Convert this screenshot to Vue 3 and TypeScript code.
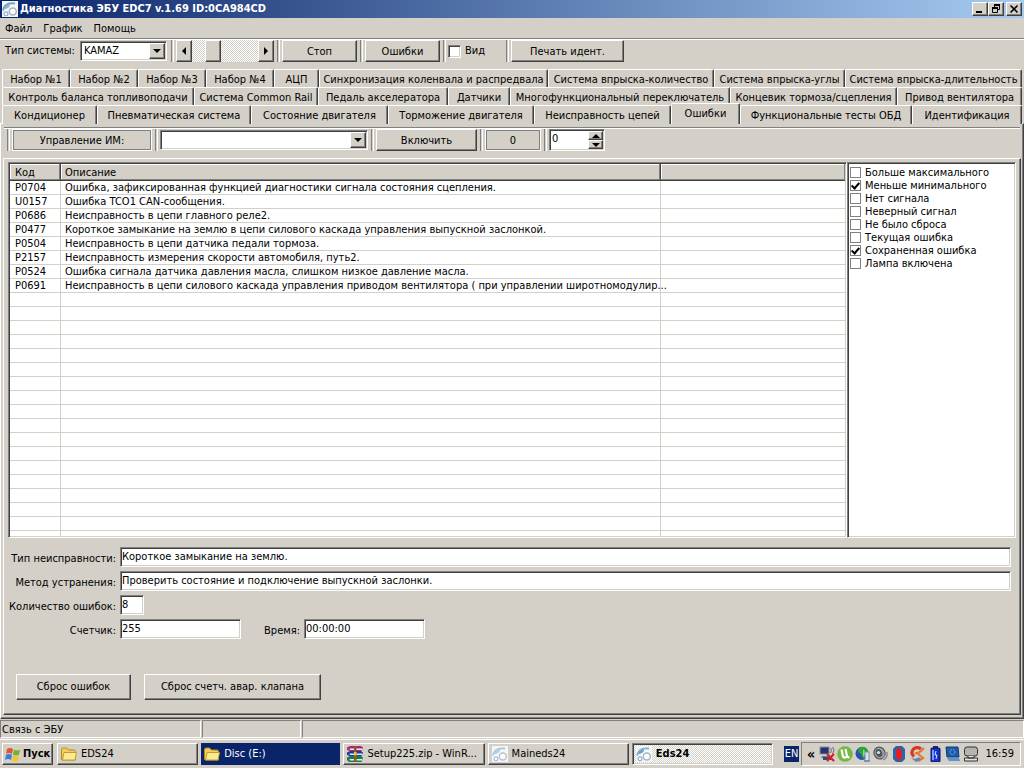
<script setup lang="ts">
import { ref } from 'vue'

interface Fault {
  code: string
  text: string
}

interface Flag {
  label: string
  on: boolean
}

const menu = ['Файл', 'График', 'Помощь']

const tabRows: string[][] = [
  ['Набор №1', 'Набор №2', 'Набор №3', 'Набор №4', 'АЦП', 'Синхронизация коленвала и распредвала', 'Система впрыска-количество', 'Система впрыска-углы', 'Система впрыска-длительность'],
  ['Контроль баланса топливоподачи', 'Система Common Rail', 'Педаль акселератора', 'Датчики', 'Многофункциональный переключатель', 'Концевик тормоза/сцепления', 'Привод вентилятора'],
  ['Кондиционер', 'Пневматическая система', 'Состояние двигателя', 'Торможение двигателя', 'Неисправность цепей', 'Ошибки', 'Функциональные тесты ОБД', 'Идентификация'],
]
const activeTab = ref('Ошибки')

const faults: Fault[] = [
  { code: 'P0704', text: 'Ошибка, зафиксированная функцией диагностики сигнала состояния сцепления.' },
  { code: 'U0157', text: 'Ошибка TCO1 CAN-сообщения.' },
  { code: 'P0686', text: 'Неисправность в цепи главного реле2.' },
  { code: 'P0477', text: 'Короткое замыкание на землю в цепи силового каскада управления выпускной заслонкой.' },
  { code: 'P0504', text: 'Неисправность в цепи датчика педали тормоза.' },
  { code: 'P2157', text: 'Неисправность измерения скорости автомобиля, путь2.' },
  { code: 'P0524', text: 'Ошибка сигнала датчика давления масла, слишком низкое давление масла.' },
  { code: 'P0691', text: 'Неисправность в цепи силового каскада управления приводом вентилятора ( при управлении широтномодулир...' },
]
const blankRows = 60

const flags = ref<Flag[]>([
  { label: 'Больше максимального', on: false },
  { label: 'Меньше минимального', on: true },
  { label: 'Нет сигнала', on: false },
  { label: 'Неверный сигнал', on: false },
  { label: 'Не было сброса', on: false },
  { label: 'Текущая ошибка', on: false },
  { label: 'Сохраненная ошибка', on: true },
  { label: 'Лампа включена', on: false },
])

const view = ref(false)
const faultType = ref('Короткое замыкание на землю.')
const remedy = ref('Проверить состояние и подключение выпускной заслонки.')
const faultCount = ref('8')
const counter = ref('255')
const time = ref('00:00:00')
const level = ref('0')

function step(delta: number) {
  level.value = String(Number(level.value) + delta)
}
</script>

<template>
  <div class="screen">
    <header class="title">
      <svg class="icon" viewBox="0 0 16 16" aria-hidden="true">
        <rect width="16" height="16" fill="#f4f6f8" />
        <path d="M1 9.500C2 4.500 6 1.500 13 2.500" fill="none" stroke="#6fa3c4" stroke-width="2" />
        <path d="M2 8C3 5 5 3.500 8 3.500L7.500 6 4 8z" fill="#8fb8d0" />
        <circle cx="10.800" cy="10.500" r="3.500" fill="#fff" stroke="#a9b3bf" stroke-width="1.500" />
        <circle cx="4" cy="12.800" r="1.900" fill="#fff" stroke="#8fb0d8" stroke-width="1.200" />
      </svg>
      <h1>Диагностика ЭБУ EDC7 v.1.69 ID:0CA984CD</h1>
      <div class="window-buttons">
        <button class="raised" aria-label="Свернуть"><svg viewBox="0 0 12 10"><path d="M2 8h6" stroke="#000" stroke-width="2" /></svg></button>
        <button class="raised" aria-label="Восстановить"><svg viewBox="0 0 12 10"><path d="M4.500 3V1.500h5v4H8M4 1.500h6M2.500 4.500h5v4h-5zM2 4.500h6" fill="none" stroke="#000" /><path d="M4 1h6M2 4h6" stroke="#000" stroke-width="2" /></svg></button>
        <button class="raised close" aria-label="Закрыть"><svg viewBox="0 0 12 10"><path d="M2.500 1.500l7 7M9.500 1.500l-7 7" stroke="#000" stroke-width="1.600" /></svg></button>
      </div>
    </header>

    <nav class="menu">
      <a v-for="item in menu" :key="item" href="#">{{ item }}</a>
    </nav>

    <div class="toolbar">
      <label class="system" for="system">Тип системы:</label>
      <div class="combo system-combo">
        <select id="system"><option>KAMAZ</option></select>
        <span class="drop raised"><i class="down"></i></span>
      </div>
      <span class="grip"></span>
      <div class="scroller">
        <button class="raised" aria-label="Назад"><i class="left"></i></button>
        <span class="thumb raised"></span>
        <button class="raised" aria-label="Вперёд"><i class="right"></i></button>
      </div>
      <span class="grip"></span>
      <button class="raised w75">Стоп</button>
      <span class="grip"></span>
      <button class="raised w75">Ошибки</button>
      <span class="grip"></span>
      <label class="view"><input v-model="view" type="checkbox" class="check sunken" />Вид</label>
      <span class="grip"></span>
      <button class="raised w113">Печать идент.</button>
    </div>

    <div class="tabs" role="tablist">
      <div v-for="(row, r) in tabRows" :key="r" class="tab-row" :class="'row-' + (r + 1)">
        <button
          v-for="tab in row"
          :key="tab"
          class="tab"
          :class="{ active: tab === activeTab }"
          role="tab"
          :aria-selected="tab === activeTab"
          @click="activeTab = tab"
        >{{ tab }}</button>
      </div>
    </div>

    <main class="page">
      <div class="toolbar control-bar">
        <span class="grip first"></span>
        <span class="etched w140">Управление ИМ:</span>
        <span class="grip"></span>
        <div class="combo actuator">
          <select aria-label="Управление ИМ"><option></option></select>
          <span class="drop raised"><i class="down"></i></span>
        </div>
        <span class="grip"></span>
        <button class="raised w101">Включить</button>
        <span class="grip"></span>
        <span class="etched w56">0</span>
        <span class="grip"></span>
        <div class="spinner sunken">
          <input v-model="level" aria-label="Значение" />
          <div class="steps">
            <button class="raised" aria-label="Больше" @click="step(1)"><i class="up"></i></button>
            <button class="raised" aria-label="Меньше" @click="step(-1)"><i class="down"></i></button>
          </div>
        </div>
      </div>

      <section class="panel">
        <div class="lists">
          <div class="fault-list sunken">
            <table>
              <colgroup><col class="c-code" /><col class="c-text" /><col /></colgroup>
              <thead>
                <tr><th>Код</th><th>Описание</th><th></th></tr>
              </thead>
              <tbody>
                <tr v-for="f in faults" :key="f.code"><td>{{ f.code }}</td><td>{{ f.text }}</td><td></td></tr>
                <tr v-for="n in blankRows" :key="n"><td></td><td></td><td></td></tr>
              </tbody>
            </table>
          </div>
          <div class="flags sunken">
            <label v-for="flag in flags" :key="flag.label"><input v-model="flag.on" type="checkbox" class="check flat" />{{ flag.label }}</label>
          </div>
        </div>

        <form class="details" @submit.prevent>
          <label for="type">Тип неисправности:</label>
          <input id="type" v-model="faultType" class="sunken" />
          <label for="remedy">Метод устранения:</label>
          <input id="remedy" v-model="remedy" class="sunken" />
          <label for="count">Количество ошибок:</label>
          <input id="count" v-model="faultCount" class="sunken tiny" />
          <label for="counter">Счетчик:</label>
          <div class="pair">
            <input id="counter" v-model="counter" class="sunken" />
            <label for="time">Время:</label>
            <input id="time" v-model="time" class="sunken" />
          </div>
        </form>

        <div class="actions">
          <button class="raised w115">Сброс ошибок</button>
          <button class="raised w177">Сброс счетч. авар. клапана</button>
        </div>
      </section>
    </main>

    <footer class="status">
      <span>Связь с ЭБУ</span><span></span><span></span>
    </footer>

    <div class="taskbar">
      <button class="raised start">
        <svg class="icon" viewBox="0 0 16 16" aria-hidden="true">
          <path d="M2 3C4 1.500 6 1.500 8 3L7 8C5 6.500 3 6.500 1 8z" fill="#e2562b" />
          <path d="M9 3.500C11 4.800 13 4.800 15 3.500L14 8.500C12 9.800 10 9.800 8 8.500z" fill="#6fb52c" />
          <path d="M1 9C3 7.500 5 7.500 7 9L6 14C4 12.500 2 12.500 0 14z" fill="#3b7de0" />
          <path d="M8 9.500C10 10.800 12 10.800 14 9.500L13 14.500C11 15.800 9 15.800 7 14.500z" fill="#f7c51e" />
        </svg>
        Пуск
      </button>
      <div class="tasks">
        <button class="raised task">
          <svg class="icon" viewBox="0 0 16 16" aria-hidden="true"><path d="M.5 3.500Q.5 2 2 2h3.500l2 2H13q1.500 0 1.500 1.500v8.500h-13q-1 0-1-1z" fill="#f2cf5c" stroke="#b48a1e" /><path d="M3 6.500h12.500l-1.500 7.500H1.500z" fill="#fdeb94" stroke="#c79b2b" /></svg>
          <span>EDS24</span>
        </button>
        <button class="task flash">
          <svg class="icon" viewBox="0 0 16 16" aria-hidden="true"><path d="M.5 3.500Q.5 2 2 2h3.500l2 2H13q1.500 0 1.500 1.500v8.500h-13q-1 0-1-1z" fill="#f2cf5c" stroke="#b48a1e" /><path d="M3 6.500h12.500l-1.500 7.500H1.500z" fill="#fdeb94" stroke="#c79b2b" /></svg>
          <span>Disc (E:)</span>
        </button>
        <button class="raised task">
          <svg class="icon" viewBox="0 0 16 16" aria-hidden="true">
            <path d="M0 1.500L3 0h11l2 1.500L14.500 5H2L0 3.500z" fill="#a82870" /><path d="M2.500 2.500H15v1.500H3z" fill="#f4e6ee" />
            <path d="M0 6.500L3 5h11l2 1.500L14.500 10H2L0 8.500z" fill="#243c9c" /><path d="M2.500 7.500H15V9H3z" fill="#e4e8f8" />
            <path d="M0 11.500L3 10h11l2 1.500-1.500 4.500H2L0 14z" fill="#1c7a50" /><path d="M2.500 13H15v1.500H3z" fill="#e0f2e8" />
            <path d="M7 0h2.500v16H7z" fill="#8c5a24" /><path d="M7 6h2.500v3.500H7z" fill="#e8c33c" />
          </svg>
          <span>Setup225.zip - WinR...</span>
        </button>
        <button class="raised task">
          <svg class="icon" viewBox="0 0 16 16" aria-hidden="true"><rect width="16" height="16" fill="#f4f6f8" /><path d="M1 9.500C2 4.500 6 1.500 13 2.500" fill="none" stroke="#a4c8da" stroke-width="1.800" /><path d="M2 8C3 5 5 3.500 8 3.500L7.500 6 4 8z" fill="#b4d0de" /><circle cx="10.800" cy="10.500" r="3.500" fill="#fff" stroke="#b9c0c8" stroke-width="1.400" /><circle cx="4" cy="12.800" r="1.900" fill="#fff" stroke="#a8c0dc" stroke-width="1.200" /></svg>
          <span>Maineds24</span>
        </button>
        <button class="task pressed sunken">
          <svg class="icon" viewBox="0 0 16 16" aria-hidden="true"><rect width="16" height="16" fill="#f4f6f8" /><path d="M1 9.500C2 4.500 6 1.500 13 2.500" fill="none" stroke="#7fb0cc" stroke-width="1.800" /><path d="M2 8C3 5 5 3.500 8 3.500L7.500 6 4 8z" fill="#6fa3c4" /><circle cx="10.800" cy="10.500" r="3.500" fill="#fff" stroke="#a9b3bf" stroke-width="1.500" /><circle cx="4" cy="12.800" r="1.900" fill="#fff" stroke="#8fb0d8" stroke-width="1.200" /></svg>
          <span>Eds24</span>
        </button>
      </div>
      <span class="lang">EN</span>
      <div class="tray">
        <button class="more" aria-label="Показать скрытые значки">«</button>
        <svg class="icon" viewBox="0 0 16 16" aria-hidden="true"><rect x="1" y="1" width="9" height="7" fill="#24346c" stroke="#8890a8" /><path d="M3 10h7v2H2z" fill="#707890" /><rect x="4" y="11" width="8" height="3" fill="#3c4870" /><path d="M11.500 2q2 2 0 5M13.500 1q3 3 0 7" fill="none" stroke="#667" /><path d="M8 8l7 7M15 8l-7 7" stroke="#d81e28" stroke-width="2.200" /></svg>
        <svg class="icon" viewBox="0 0 16 16" aria-hidden="true"><circle cx="8" cy="8" r="7.800" fill="#76b83f" /><path d="M4.500 3.500l1.500 7q2 2.500 4-.5L8.500 3M10 9.500q.5 2.500 2.500 1.500" fill="none" stroke="#fff" stroke-width="2.200" /></svg>
        <svg class="icon" viewBox="0 0 16 16" aria-hidden="true"><circle cx="7" cy="7.500" r="6.500" fill="#2450b8" /><path d="M4 1.500Q10-1 13 4l-2 5-3 4-2-5-3-2z" fill="#2ea43c" /><path d="M8 3l3 4-3 4z" fill="#8ce060" /><rect x="10" y="6" width="4" height="9" fill="#d8e0ec" stroke="#8090b0" /><path d="M9 15h6" stroke="#5870a0" /></svg>
        <svg class="icon" viewBox="0 0 16 16" aria-hidden="true"><ellipse cx="6.500" cy="7" rx="5.500" ry="6" fill="#a0a4a8" stroke="#484c50" transform="rotate(-25 6.500 7)" /><ellipse cx="6" cy="7" rx="3.200" ry="4" fill="#50545c" transform="rotate(-25 6 7)" /><circle cx="5.500" cy="6.500" r="1.600" fill="#dce0e4" /><path d="M10 14q5-2 4-8M9 12q3-1 3-4" fill="none" stroke="#80858c" stroke-width="1.300" /></svg>
        <svg class="icon" viewBox="0 0 16 16" aria-hidden="true"><path d="M5 0h6l3 3v10l-3 3H5l-3-3V3z" fill="#2f62a8" /><path d="M8 1l3 4v6l-3 4-3-4V5z" fill="#e01c24" /></svg>
        <svg class="icon" viewBox="0 0 16 16" aria-hidden="true"><path d="M12 3Q8 0 4.500 3 1 7 5 10.500" fill="none" stroke="#d63a20" stroke-width="3.200" /><path d="M6 7q4 1 9-5M8 7l6 5-5 3" fill="none" stroke="#e27838" stroke-width="2.200" /><path d="M2 12q5 2 8-1l2 3-5 2z" fill="#6c84a8" /></svg>
        <svg class="icon" viewBox="0 0 16 16" aria-hidden="true"><rect x="6" y="0" width="5" height="2" fill="#283058" /><rect x="4" y="2" width="9" height="14" rx="1" fill="#1830c8" stroke="#0a1450" /><path d="M6 4v10" stroke="#6ca0ff" stroke-width="2" /><path d="M9 5l-1 4h2l-1 4" fill="none" stroke="#d8e8ff" /></svg>
        <svg class="icon" viewBox="0 0 16 16" aria-hidden="true"><path d="M1 1h12l1 10H2z" fill="#1c5ca8" stroke="#123c78" /><path d="M2 12h12l1 3H4z" fill="#5c94d0" /><circle cx="7.500" cy="6" r="2.500" fill="none" stroke="#8cc4f0" stroke-dasharray="1 1" /></svg>
        <svg class="icon" viewBox="0 0 16 16" aria-hidden="true"><rect x="1.500" y="1" width="13" height="9" rx="2.500" fill="#b4b4b0" stroke="#303030" /><path d="M5 10v2h6v-2M1.500 12h13v3h-13z" fill="#e4e4e0" stroke="#303030" /></svg>
        <time>16:59</time>
      </div>
    </div>
  </div>
</template>

<style>
body {
  margin: 0;
  background: #d4d0c8;
}
</style>

<style scoped>
.screen {
  display: flex;
  flex-direction: column;
  height: 100vh;
  min-height: 560px;
  overflow: hidden;
  background: #d4d0c8;
  color: #000;
  font: 11px/14px "DejaVu Sans Condensed", "Noto Sans", sans-serif;
}
.screen * {
  box-sizing: border-box;
}
button,
input,
select {
  margin: 0;
  padding: 0;
  border: 0;
  border-radius: 0;
  background: none;
  color: inherit;
  font: inherit;
  outline: 0;
  appearance: none;
}
button {
  white-space: nowrap;
}
.icon {
  flex: none;
  width: 16px;
  height: 16px;
}
.raised {
  background: #d4d0c8;
  border: 1px solid;
  border-color: #fff #404040 #404040 #fff;
  box-shadow: inset -1px -1px #808080;
}
.sunken {
  background: #fff;
  border: 1px solid;
  border-color: #808080 #fff #fff #808080;
  box-shadow: inset 1px 1px #404040, inset -1px -1px #d4d0c8;
}
.title {
  display: flex;
  align-items: center;
  flex: none;
  height: 18px;
  padding: 0 2px;
  gap: 2px;
  background: linear-gradient(90deg, #0a246a, #a6caf0);
  color: #fff;
}
.title h1 {
  flex: 1;
  margin: 0;
  font-size: 11px;
  font-weight: bold;
  white-space: nowrap;
}
.window-buttons {
  display: flex;
}
.window-buttons button {
  display: flex;
  align-items: center;
  justify-content: center;
  width: 16px;
  height: 14px;
}
.window-buttons svg {
  width: 12px;
  height: 10px;
}
.window-buttons .close {
  margin-left: 2px;
}
.menu {
  display: flex;
  align-items: center;
  flex: none;
  gap: 11px;
  height: 21px;
  padding: 1px 5px 0;
  border-bottom: 1px solid #808080;
}
.menu a {
  color: inherit;
  text-decoration: none;
}
.toolbar {
  display: flex;
  align-items: flex-start;
  flex: none;
  height: 24px;
  border-top: 1px solid #fff;
  white-space: nowrap;
}
.toolbar > * {
  flex: none;
  height: 22px;
}
.toolbar > button,
.etched {
  padding-top: 1px;
}
.system {
  width: 80px;
  padding: 4px 0 0 5px;
}
.grip {
  width: 3px;
  margin: 0 2px 0 3px;
  border-left: 1px solid #808080;
  border-right: 1px solid #fff;
}
.combo {
  position: relative;
  margin-top: 1px;
}
.toolbar .combo {
  height: 20px;
}
.combo select {
  width: 100%;
  height: 100%;
  padding: 0 20px 0 3px;
  background: #fff;
  border: 1px solid;
  border-color: #808080 #fff #fff #808080;
  box-shadow: inset 1px 1px #404040, inset -1px -1px #d4d0c8;
}
.drop {
  position: absolute;
  top: 2px;
  right: 2px;
  bottom: 2px;
  display: flex;
  align-items: center;
  justify-content: center;
  width: 16px;
  pointer-events: none;
}
.system-combo {
  width: 87px;
  margin-right: 1px;
}
.actuator {
  width: 208px;
}
.up,
.down,
.left,
.right {
  width: 0;
  height: 0;
  border: 4px solid transparent;
}
.down {
  border-top-color: #000;
  border-bottom: 0;
}
.up {
  border-bottom-color: #000;
  border-top: 0;
}
.left {
  border-right-color: #000;
  border-left: 0;
}
.right {
  border-left-color: #000;
  border-right: 0;
}
.scroller {
  display: flex;
  width: 98px;
  background: repeating-conic-gradient(#fff 0 25%, #d4d0c8 0 50%) 0 0 / 2px 2px;
}
.scroller button,
.scroller .thumb {
  display: flex;
  align-items: center;
  justify-content: center;
  width: 16px;
}
.scroller .thumb {
  margin: 0 auto 0 13px;
}
.w56 { width: 56px; }
.w75 { width: 75px; }
.w101 { width: 101px; }
.w113 { width: 113px; }
.w115 { width: 115px; }
.w140 { width: 140px; }
.w177 { width: 177px; }
.view {
  display: flex;
  align-items: center;
  gap: 4px;
  width: 55px;
}
.check {
  display: grid;
  place-items: center;
  flex: none;
  width: 13px;
  height: 13px;
}
.check:checked::after {
  content: "";
  width: 3px;
  height: 6px;
  margin-bottom: 2px;
  border: solid #000;
  border-width: 0 2px 2px 0;
  transform: rotate(42deg);
}
.flat {
  width: 11px;
  height: 11px;
  border: 1px solid #808080;
  background: #fff;
}
.tabs {
  position: relative;
  z-index: 1;
  flex: none;
  padding: 6px 2px 0;
}
.tab-row {
  display: grid;
  height: 18px;
}
.row-1 {
  grid-template-columns: 68fr 68fr 68fr 68fr 45fr 229fr 166fr 131fr 177fr;
}
.row-2 {
  grid-template-columns: 192fr 124fr 130fr 62fr 220fr 167fr 125fr;
}
.row-3 {
  grid-template-columns: 95fr 154fr 137fr 146fr 137fr 69fr 172fr 110fr;
}
.tab {
  min-width: 0;
  padding-top: 2px;
  background: #d4d0c8;
  border: 1px solid;
  border-color: #fff #404040 transparent #fff;
  border-bottom: 0;
  border-radius: 2px 2px 0 0;
  box-shadow: inset -1px 0 #808080;
}
.tab.active {
  height: 21px;
  margin-top: -2px;
  padding-bottom: 2px;
}
.page {
  display: flex;
  flex-direction: column;
  flex: 1;
  min-height: 0;
  padding: 3px 2px;
  border: 1px solid;
  border-color: #fff #404040 #404040 #fff;
  box-shadow: inset -1px -1px #808080;
}
.control-bar {
  height: 31px;
  margin: 0 1px;
  border-top: 1px solid #808080;
  box-shadow: inset 0 1px #fff;
  padding-top: 1px;
}
.etched {
  display: flex;
  align-items: center;
  justify-content: center;
  border: 1px solid #fff;
  box-shadow: inset 0 0 0 1px #808080;
}
.spinner {
  display: flex;
  width: 56px;
  padding: 1px;
}
.spinner input {
  flex: 1;
  min-width: 0;
  padding: 0 1px 2px;
}
.steps {
  display: flex;
  flex-direction: column;
  width: 15px;
}
.steps button {
  display: flex;
  align-items: center;
  justify-content: center;
  flex: 1;
}
.panel {
  display: flex;
  flex-direction: column;
  flex: 1;
  min-height: 0;
  padding: 3px 4px 14px;
  border: 1px solid;
  border-color: #fff #404040 #404040 #fff;
  box-shadow: inset -1px -1px #808080;
}
.lists {
  display: flex;
  flex: 1;
  min-height: 0;
}
.fault-list {
  flex: 1;
  min-width: 0;
  padding: 1px;
  overflow: hidden;
}
table {
  width: 100%;
  table-layout: fixed;
  border-collapse: separate;
  border-spacing: 0;
}
.c-code {
  width: 51px;
}
.c-text {
  width: 600px;
}
th {
  height: 17px;
  padding: 2px 4px 0;
  background: #d4d0c8;
  border-right: 1px solid #404040;
  border-bottom: 1px solid #404040;
  box-shadow: inset -1px -1px #808080, inset 1px 1px #fff;
  font-weight: normal;
  text-align: left;
}
td {
  height: 14px;
  padding: 1px 4px 0;
  border-right: 1px solid #d4d0c8;
  border-bottom: 1px solid #d4d0c8;
  line-height: 12px;
  white-space: nowrap;
}
th:first-child,
td:first-child {
  padding-left: 5px;
}
th:last-child,
td:last-child {
  border-right: 0;
}
.flags {
  flex: none;
  width: 169px;
  padding: 3px 2px;
}
.flags label {
  display: flex;
  align-items: center;
  gap: 4px;
  height: 13px;
  white-space: nowrap;
}
.details {
  display: grid;
  grid-template-columns: 108px 1fr;
  gap: 4px;
  margin: 9px 5px 0 0;
}
.details label {
  padding-top: 5px;
  text-align: right;
  line-height: 13px;
  white-space: nowrap;
}
.details input {
  min-width: 0;
  height: 20px;
  padding: 0 1px 2px;
}
.details .tiny {
  width: 24px;
}
.pair {
  display: grid;
  grid-template-columns: 121px 55px 121px;
  column-gap: 4px;
}
.actions {
  display: flex;
  gap: 13px;
  margin: 35px 0 0 8px;
}
.actions button {
  height: 26px;
}
.status {
  display: grid;
  grid-template-columns: 201px 99px 1fr;
  gap: 1px;
  flex: none;
  height: 20px;
  padding: 1px 0;
}
.status span {
  padding: 2px 1px 0;
  border: 1px solid;
  border-color: #808080 #fff #fff #808080;
}
.taskbar {
  display: flex;
  align-items: center;
  flex: none;
  height: 29px;
  padding: 0 3px 1px 2px;
  border-top: 1px solid #fff;
}
.start {
  display: flex;
  align-items: center;
  gap: 2px;
  width: 51px;
  height: 22px;
  padding: 0 2px;
  font-weight: bold;
}
.tasks {
  display: flex;
  flex: 1;
  gap: 3px;
  margin: 0 11px 0 4px;
}
.task {
  display: flex;
  align-items: center;
  flex: 1;
  gap: 4px;
  min-width: 0;
  height: 22px;
  padding: 0 3px;
}
.flash {
  background: #0a246a;
  color: #fff;
}
.pressed {
  background: repeating-conic-gradient(#fff 0 25%, #d4d0c8 0 50%) 0 0 / 2px 2px;
  font-weight: bold;
}
.lang {
  width: 15px;
  height: 16px;
  margin-right: 2px;
  background: #0a246a;
  color: #fff;
  line-height: 16px;
  text-align: center;
}
.tray {
  display: flex;
  align-items: center;
  gap: 2px;
  width: 220px;
  height: 24px;
  padding: 0 6px 0 3px;
  border: 1px solid;
  border-color: #808080 #fff #fff #808080;
}
.more {
  width: 12px;
  font-size: 14px;
  font-weight: bold;
}
.tray time {
  margin-left: auto;
}
</style>
